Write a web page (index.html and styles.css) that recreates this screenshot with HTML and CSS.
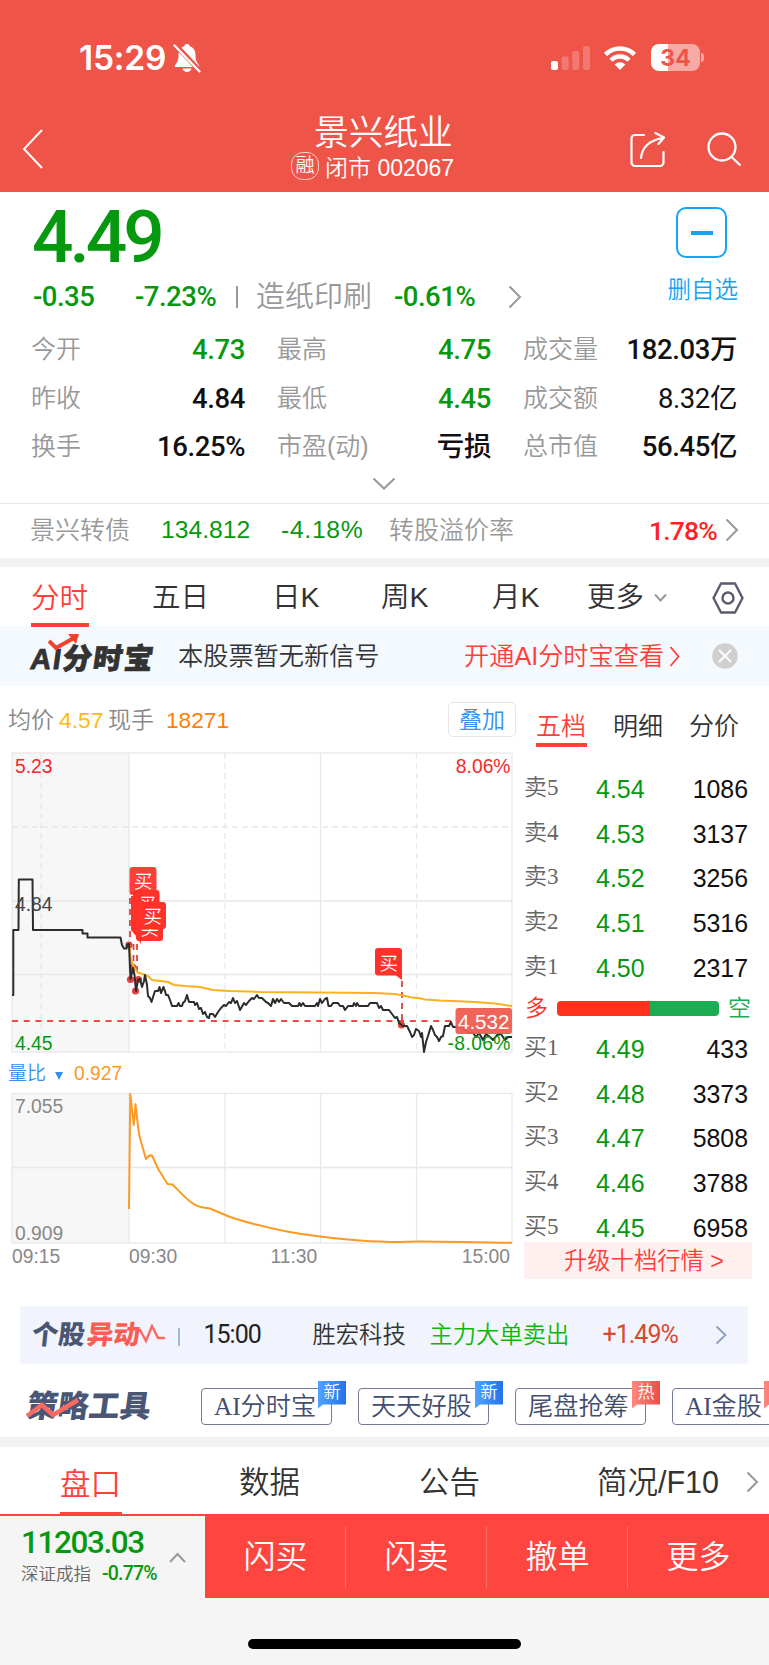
FILE: index.html
```html
<!DOCTYPE html>
<html lang="zh-CN">
<head>
    <meta charset="UTF-8">
    <title>景兴纸业 002067</title>
    <link rel="stylesheet" href="styles.css">
</head>
<body>
    <header class="header">
        <div class="status-bar">
            <span class="clock">15:29</span>
            <svg class="bell" width="28" height="30" viewBox="0 0 28 30">
                <path d="M14 1c-1.600 0-2.500.9-2.700 2.200C7.300 4.500 5.500 7.800 5.500 12c0 5-1 7.200-3.500 10.200-.8 1 0 1.800 1 1.800h22c1 0 1.800-.8 1-1.800C23.500 19.200 22.500 17 22.500 12c0-4.200-1.800-7.500-5.800-8.800C16.500 1.900 15.600 1 14 1zM9.500 25.500c.6 2.200 2.200 3.500 4.500 3.500s3.900-1.300 4.500-3.500z" fill="#fff"/>
                <path d="M3 2.500L27 28" stroke="#ef5449" stroke-width="5"/>
                <path d="M1.500 2.500L26.500 28.500" stroke="#fff" stroke-width="2.200" stroke-linecap="round"/>
            </svg>
            <svg class="signal" width="40" height="26" viewBox="0 0 40 26" fill="#fff">
                <rect x="0" y="16" width="7" height="9" rx="2"/>
                <rect x="10.700" y="11.500" width="7" height="13.500" rx="2" opacity=".22"/>
                <rect x="21.300" y="6" width="7" height="19" rx="2" opacity=".22"/>
                <rect x="32" y="1" width="7" height="24" rx="2" opacity=".22"/>
            </svg>
            <svg class="wifi" width="34" height="26" viewBox="0 0 34 26">
                <path d="M2.500 9.500a20.500 20.500 0 0 1 29 0" fill="none" stroke="#fff" stroke-width="4.600"/>
                <path d="M8 15.300a12.600 12.600 0 0 1 18 0" fill="none" stroke="#fff" stroke-width="4.400"/>
                <path d="M17 25l-5.300-5.600a7.600 7.600 0 0 1 10.600 0z" fill="#fff"/>
            </svg>
            <div class="battery"><span>34</span></div>
        </div>
        <div class="title-bar">
            <svg class="back" width="22" height="40" viewBox="0 0 22 40"><path d="M20 1L2 20l18 19" fill="none" stroke="#fff" stroke-width="2"/></svg>
            <div class="title">
                <h1>景兴纸业</h1>
                <p><i class="margin-mark">融</i>闭市 002067</p>
            </div>
            <svg class="share" width="36" height="37" viewBox="0 0 36 37" fill="none" stroke="#fff" stroke-width="2.200" stroke-linecap="round" stroke-linejoin="round">
                <path d="M14 3H5a3.500 3.500 0 0 0-3.500 3.500v24A3.500 3.500 0 0 0 5 34h25a3.500 3.500 0 0 0 3.500-3.500V20"/>
                <path d="M11 26C12 16 18 8.500 33 6M25.500 1L34 5.500 28.500 12"/>
            </svg>
            <svg class="search" width="35" height="35" viewBox="0 0 35 35" fill="none" stroke="#fff" stroke-width="2.300">
                <circle cx="15" cy="15" r="13.500"/><path d="M24 24.500l9.500 9"/>
            </svg>
        </div>
    </header>

    <section class="quote">
        <div class="quote-top">
            <div>
                <div class="price">4.49</div>
                <div class="change">
                    <span class="chg">-0.35</span>
                    <span class="pct">-7.23%</span>
                    <span class="bar"></span>
                    <span class="industry">造纸印刷</span>
                    <span class="ind-pct">-0.61%</span>
                    <svg width="14" height="24" viewBox="0 0 14 24"><path d="M1.500 1.500L12 12 1.500 22.500" class="chev"/></svg>
                </div>
            </div>
            <div class="unfollow">
                <div class="minus"></div>
                <span>删自选</span>
            </div>
        </div>
        <dl class="stats">
            <div><dt>今开</dt><dd class="green">4.73</dd></div>
            <div><dt>最高</dt><dd class="green">4.75</dd></div>
            <div><dt>成交量</dt><dd>182.03万</dd></div>
            <div><dt>昨收</dt><dd>4.84</dd></div>
            <div><dt>最低</dt><dd class="green">4.45</dd></div>
            <div><dt>成交额</dt><dd class="thin">8.32亿</dd></div>
            <div><dt>换手</dt><dd>16.25%</dd></div>
            <div><dt>市盈(动)</dt><dd>亏损</dd></div>
            <div><dt>总市值</dt><dd>56.45亿</dd></div>
        </dl>
        <svg class="expand" width="24" height="14" viewBox="0 0 24 14"><path d="M1.500 1.500L12 11.500l10.500-10" class="chev"/></svg>
    </section>

    <section class="bond">
        <span class="bond-name">景兴转债</span>
        <span class="bond-price">134.812</span>
        <span class="bond-pct">-4.18%</span>
        <span class="bond-label">转股溢价率</span>
        <span class="premium">1.78%</span>
        <svg width="14" height="24" viewBox="0 0 14 24"><path d="M1.500 1.500L12 12 1.500 22.500" class="chev"/></svg>
    </section>

    <nav class="period">
        <span class="active">分时</span>
        <span>五日</span>
        <span>日K</span>
        <span>周K</span>
        <span>月K</span>
        <span>更多</span>
        <svg class="more-arrow" width="13" height="10" viewBox="0 0 13 10"><path d="M1 1.500l5.500 6 5.500-6" class="chev"/></svg>
        <svg class="gear" width="32" height="32" viewBox="0 0 32 32" fill="none" stroke="#5b5b70" stroke-width="2.400" stroke-linejoin="round">
            <path d="M9 1.500h14L30.500 16 23 30.500H9L1.500 16z"/><circle cx="16" cy="16" r="5.500"/>
        </svg>
    </nav>

    <section class="ai-banner">
        <div class="ai-logo">
            <span>AI分时宝</span>
            <svg width="34" height="20" viewBox="0 0 34 20"><path d="M1 7l7 7L25 4.500" fill="none" stroke="#f5402f" stroke-width="4"/><path d="M20 0h11l-3 10z" fill="#f5402f"/></svg>
        </div>
        <span class="ai-text">本股票暂无新信号</span>
        <span class="ai-link">开通AI分时宝查看</span>
        <svg width="11" height="21" viewBox="0 0 11 21"><path d="M1.500 1l8 9.500-8 9.500" fill="none" stroke="#ff4039" stroke-width="1.800"/></svg>
        <svg class="close" width="26" height="26" viewBox="0 0 26 26"><circle cx="13" cy="13" r="12.800" fill="#cfcfcf"/><path d="M7 7l12 12M19 7L7 19" stroke="#fff" stroke-width="1.800"/></svg>
    </section>

    <main class="market">
        <div class="charts">
            <div class="chart-info">
                <span>均价</span><span class="avg">4.57</span><span>现手</span><span class="hand">18271</span>
                <button class="overlay">叠加</button>
            </div>
            <svg class="minute" width="520" height="308" viewBox="0 748 520 308">
                <rect x="12" y="753" width="117" height="299" fill="#f7f7f7"/>
                <g class="grid">
                    <rect x="12" y="753" width="500" height="299" fill="none"/>
                    <path d="M12 901H512M12 974.500H512M129 753V1052M320.500 753V1052"/>
                    <path class="dash" d="M12 827H512M41 753V1052M225 753V1052M416.500 753V1052"/>
                </g>
                <path class="now" d="M12 1021H456"/>
                <path class="flag-line" d="M130 898V944M137 944V980M133.500 944V970"/>
                <path class="flag-line" d="M402 981V1024"/>
                <g fill="#e0423d">
                    <circle cx="129" cy="945" r="3.600"/><circle cx="130.500" cy="979.500" r="3.600"/><circle cx="135.500" cy="991" r="3.600"/><circle cx="138.500" cy="979.500" r="3.600"/><circle cx="132.500" cy="967" r="3.600"/><circle cx="401.500" cy="1025" r="3.600"/>
                </g>
                <polyline class="avg-line" points="129,945 131,960 134,967 137,972 145,975 148,976 152,980 168,982 174,985 185,986 200,987 213,990 230,991 260,992 320,992.500 373,993 395,994 405,996 412,997.500 418,998 425,999.500 440,1000.500 475,1002 495,1003.500 512,1006"/>
                <polyline class="price-line" points="12,995 13.300,995 13.300,930 18.500,930 18.800,879.500 32.500,879.500 33,930 82.500,930 82.500,933.500 87.500,933.500 87.500,937.500 120.500,937.500 122,945 124,948.500 126.500,948.500 127,945 129,944 130.500,979 133,968 134.500,975 136,991 138,980 140,979 142,987 144,981 145,975 147,985 148,996 150,998 151.500,1002 154,994 155,991 158,991 159.500,987 161,993 163.500,987 165,991 166,995 168,995 170,1000 172,1006 177,1006 178.500,1003 180,1006 182,1006 183,1003 185,1001 187,995 189,1002 194,1002 195,1005 197,1003 199,1009 201,1008 203,1014 205,1012 207,1017 209,1018 210,1014 213,1014 215,1017 218,1012 221,1008 224,1005 226,1006 229,1002 231,1003 233,998 235,1003 237,1001 240,1010 244,1003 246,1005 249,1001 252,998 254,999 257,995 259,998 262,998 264,1000 266,1002 268,1003 271,1006 273,999 275,1003 277,999 279,1002 281,999 284,1003 289,1003 292,1006 298,1006 299.500,1003 301,1006 303,1003 305,1006 315,1006 317,1003 318,1006 320,999 322,1003 325,999 327,998 328.500,1006 331,1006 333,1003 338,1003 340,1006 343,1006 345,1010 348,1006 353,1006 354,1003 356,1006 357,1003 359,1006 368,1006 370,1003 377,1003 379,1008 381,1006 383,1010 389,1010 392,1014 395,1018 397,1017 399,1023 403,1026 407,1026 410,1032 412,1037 414,1035 416,1029 419,1031 421,1037 422,1033 424,1052 426,1042 428,1036 431,1026 433,1030 435,1035 437,1037 439,1041 441,1037 443,1036 445,1026 449,1026 451,1022 453,1027 456,1027 460,1026 468,1033 473,1033 476,1037 479,1033 483,1040 486,1034 490,1037 493,1040 497,1035 501,1034 505,1040 508,1037 512,1037"/>
                <g class="flag">
                    <rect x="129.500" y="867" width="27" height="28" rx="3" opacity=".93"/>
                    <text x="134" y="887.500">买</text>
                    <rect x="133" y="890" width="26.500" height="27" rx="3"/>
                    <text x="137.500" y="910.500">买</text>
                    <rect x="136" y="905" width="27" height="36" rx="3"/>
                    <text x="140.500" y="935">买</text>
                    <path d="M131 896h10v48l-5-8-5-6z"/>
                    <rect x="139.500" y="902" width="26.500" height="27" rx="3"/>
                    <text x="143.500" y="922.500">买</text>
                    <path d="M378 948h21a3 3 0 0 1 3 3v29l-6-4.500h-18a3 3 0 0 1-3-3v-21.500a3 3 0 0 1 3-3z"/>
                    <text x="379.500" y="969.500">买</text>
                </g>
                <rect x="455.500" y="1008" width="56.500" height="26" rx="3" fill="#ef5a50" opacity=".94"/>
                <text x="458" y="1029" class="now-text">4.532</text>
                <g class="label">
                    <text x="15" y="772.500" fill="#f5282b">5.23</text>
                    <text x="15" y="911" fill="#444">4.84</text>
                    <text x="15" y="1049.500" fill="#06980f">4.45</text>
                    <text x="510.500" y="772.500" fill="#f5282b" text-anchor="end">8.06%</text>
                    <text x="510.500" y="1050" fill="#06980f" text-anchor="end" textLength="63">-8.06%</text>
                </g>
            </svg>
            <div class="volume-info"><span>量比</span><i></i><b>0.927</b></div>
            <svg class="volume" width="520" height="183" viewBox="0 1087 520 183">
                <rect x="12" y="1093.500" width="117" height="149.500" fill="#f7f7f7"/>
                <g class="grid">
                    <rect x="12" y="1093.500" width="500" height="149.500" fill="none"/>
                    <path d="M12 1167.500H512M129 1093V1243M225 1093V1243M320.500 1093V1243M416.500 1093V1243"/>
                </g>
                <path class="ratio-line" d="M129 1209L130.300 1094 133.800 1125 135.500 1104C138 1125 138 1132 140.500 1140L146 1159C148 1156 150 1155 152 1155.500L158.500 1169.500 167.500 1184 172.500 1184.500C184 1196 192 1206 203 1207.500L210 1208.500 230 1217C270 1230 305 1236 360 1240.500 382 1242 395 1242.600 416 1241.600 440 1241.200 470 1242.500 512 1242.800"/>
                <g class="label" fill="#888">
                    <text x="15" y="1112.500">7.055</text>
                    <text x="15" y="1239.500">0.909</text>
                    <text x="12" y="1262.500">09:15</text>
                    <text x="129" y="1262.500">09:30</text>
                    <text x="270.500" y="1262.500">11:30</text>
                    <text x="510" y="1262.500" text-anchor="end">15:00</text>
                </g>
            </svg>
        </div>

        <div class="depth">
            <div class="depth-tabs"><span class="active">五档</span><span>明细</span><span>分价</span></div>
            <ul>
                <li><span>卖5</span><b>4.54</b><em>1086</em></li>
                <li><span>卖4</span><b>4.53</b><em>3137</em></li>
                <li><span>卖3</span><b>4.52</b><em>3256</em></li>
                <li><span>卖2</span><b>4.51</b><em>5316</em></li>
                <li><span>卖1</span><b>4.50</b><em>2317</em></li>
            </ul>
            <div class="ratio"><span class="bull">多</span><div class="ratio-bar"></div><span class="bear">空</span></div>
            <ul>
                <li><span>买1</span><b>4.49</b><em>433</em></li>
                <li><span>买2</span><b>4.48</b><em>3373</em></li>
                <li><span>买3</span><b>4.47</b><em>5808</em></li>
                <li><span>买4</span><b>4.46</b><em>3788</em></li>
                <li><span>买5</span><b>4.45</b><em>6958</em></li>
            </ul>
            <div class="upgrade">升级十档行情 &gt;</div>
        </div>
    </main>

    <section class="alert">
        <div class="alert-logo"><span>个股</span><span class="hot">异动</span></div>
        <svg width="28" height="22" viewBox="0 0 28 22"><path d="M0 6l3 0 6 11L15 2l6 12h7" fill="none" stroke="#fb6a61" stroke-width="2.400"/></svg>
        <span class="alert-bar"></span>
        <span class="alert-time">15:00</span>
        <span class="alert-name">胜宏科技</span>
        <span class="alert-type">主力大单卖出</span>
        <span class="alert-pct">+1.49%</span>
        <svg width="12" height="20" viewBox="0 0 12 20"><path d="M1.500 1.500L10.500 10l-9 8.500" fill="none" stroke="#8d9cc4" stroke-width="1.800"/></svg>
    </section>

    <section class="tools">
        <div class="tools-logo">
            <span>策略工具</span>
            <svg width="54" height="22" viewBox="0 0 54 22"><path d="M1 19L16 8l11 10L52 3" fill="none" stroke="#fb6a61" stroke-width="4.500"/></svg>
        </div>
        <div class="tool">AI分时宝<i class="badge">新</i></div>
        <div class="tool">天天好股<i class="badge">新</i></div>
        <div class="tool">尾盘抢筹<i class="badge hot">热</i></div>
        <div class="tool short">AI金股<i class="badge hot">热</i></div>
    </section>

    <nav class="info-tabs">
        <span class="active">盘口</span>
        <span>数据</span>
        <span>公告</span>
        <span class="f10">简况/F10</span>
        <svg width="13" height="22" viewBox="0 0 13 22"><path d="M1.500 1.500L11 11l-9.500 9.500" class="chev"/></svg>
    </nav>

    <footer class="trade">
        <div class="index">
            <div>
                <strong>11203.03</strong>
                <p>深证成指<b>-0.77%</b></p>
            </div>
            <svg width="17" height="11" viewBox="0 0 17 11"><path d="M1 10l7.500-8L16 10" class="chev"/></svg>
        </div>
        <button>闪买</button>
        <button>闪卖</button>
        <button>撤单</button>
        <button>更多</button>
    </footer>
    <div class="home"></div>
</body>
</html>
```

FILE: styles.css
```css
* {
    box-sizing: border-box;
}

body {
    margin: 0;
    width: 769px;
    height: 1665px;
    overflow: hidden;
    background: #fff;
    color: #333;
    font-family: "Liberation Sans", "Noto Sans CJK SC", sans-serif;
    font-weight: 350;
}

h1, p, ul, dl, dd {
    margin: 0;
    padding: 0;
    font-weight: inherit;
}

svg {
    display: block;
    flex: none;
}

span {
    white-space: nowrap;
}

i, em {
    font-style: normal;
}

button {
    padding: 0;
    font: inherit;
}

.chev {
    fill: none;
    stroke: #999;
    stroke-width: 2;
}

.green {
    color: #06980f;
}

/* header */
.header {
    height: 191.500px;
    background: #ef5449;
    color: #fff;
}

.status-bar {
    display: flex;
    align-items: center;
    height: 115px;
    padding-left: 79px;
}

.clock {
    width: 94px;
    font: 600 33.500px "Inter", sans-serif;
    letter-spacing: -0.200px;
}

.signal {
    margin-left: 350px;
}

.wifi {
    margin-left: 12px;
}

.battery {
    position: relative;
    width: 49px;
    height: 27px;
    margin-left: 14px;
    border-radius: 8px;
    background: linear-gradient(90deg, #fff 17px, #f7a9a3 17px);
    color: #ef5449;
    font: 700 23px/28px "Inter", sans-serif;
    text-align: center;
}

.battery::after {
    content: "";
    position: absolute;
    right: -4px;
    top: 9px;
    width: 3px;
    height: 9px;
    border-radius: 0 3px 3px 0;
    background: #f7a9a3;
}

.title-bar {
    display: flex;
    height: 76px;
    padding-left: 22px;
}

.back {
    margin-top: 14px;
}

.title {
    width: 182px;
    margin-left: 247px;
}

.title h1 {
    padding-left: 23px;
    font-size: 34.700px;
    line-height: 36px;
}

.title p {
    display: flex;
    align-items: center;
    height: 30px;
    font-size: 23px;
}

.margin-mark {
    width: 28px;
    height: 28px;
    margin-right: 6px;
    border: 1.500px solid #fbd0cc;
    border-radius: 12px;
    font-size: 19px;
    line-height: 26px;
    text-align: center;
}

.share {
    margin: 17px 0 0 157px;
}

.search {
    margin: 17px 0 0 41px;
}

/* quote */
.quote {
    height: 311.500px;
}

.quote-top {
    display: flex;
    justify-content: space-between;
    height: 133.500px;
    padding: 0 31px 0 32px;
}

.price {
    height: 88px;
    color: #06980f;
    font: 500 73px/90px Roboto, sans-serif;
    letter-spacing: -4px;
}

.change {
    display: flex;
    align-items: center;
    height: 34px;
    color: #06980f;
    font: 500 27.500px Roboto, "Noto Sans CJK SC", sans-serif;
    letter-spacing: -0.500px;
}

.chg, .pct {
    width: 102px;
    padding-left: 1px;
}

.bar {
    width: 2px;
    height: 22px;
    background: #999;
}

.industry {
    margin-left: 18px;
    width: 138px;
    color: #999;
    font: 350 29px/34px "Liberation Sans", "Noto Sans CJK SC", sans-serif;
    letter-spacing: 0;
}

.ind-pct {
    width: 114px;
}

.unfollow {
    display: flex;
    flex-direction: column;
    align-items: center;
    padding-top: 15.500px;
    color: #12a5f5;
    font-size: 23.500px;
}

.minus {
    display: flex;
    align-items: center;
    justify-content: center;
    width: 51px;
    height: 51px;
    margin-bottom: 13px;
    margin-right: 2px;
    border: 2px solid #12a5f5;
    border-radius: 10px;
}

.minus::before {
    content: "";
    width: 22px;
    height: 4px;
    background: #12a5f5;
}

.stats {
    display: grid;
    grid-template-columns: repeat(3, 214px);
    column-gap: 32px;
    padding: 0 31px;
    grid-auto-rows: 48.500px;
}

.stats div {
    display: flex;
    justify-content: space-between;
    align-items: center;
}

.stats dt {
    color: #999;
    font-size: 25px;
    line-height: 34px;
}

.stats dd {
    font: 500 27.500px Roboto, "Noto Sans CJK SC", sans-serif;
    line-height: 34px;
    padding-top: 2px;
    letter-spacing: -0.400px;
}

.stats dd:not(.green) {
    color: #111;
}

.stats .thin {
    font-weight: 400;
}

.expand {
    margin: 6px auto 0 372px;
}

.bond {
    display: flex;
    align-items: center;
    height: 64px;
    padding: 0 0 2px 30px;
    border-top: 1px solid #e8e8e8;
    border-bottom: 9px solid #f2f2f2;
    color: #999;
    font-size: 25px;
    line-height: 34px;
}

.bond-name {
    width: 131px;
}

.bond-price, .bond-pct {
    color: #06980f;
    width: 120px;
    font-size: 24.700px;
}

.bond-pct {
    width: 108px;
    letter-spacing: 0.700px;
}

.premium {
    width: 76px;
    margin-left: auto;
    color: #ff2222;
    font: 500 26.500px Roboto, sans-serif;
    letter-spacing: -0.800px;
}

.bond svg {
    margin-right: 30px;
}

/* chart period tabs */
.period {
    display: grid;
    grid-template-columns: 120px 120px 109px 111px 95px 67px 58px 1fr;
    align-items: center;
    height: 59px;
    padding-left: 32px;
    font-size: 28.500px;
    line-height: 61px;
}

.active {
    color: #ff4039;
}

.period .active {
    width: 58px;
    height: 59px;
    margin-left: -1px;
    border-bottom: 4px solid #ff4039;
}

.ai-banner {
    display: flex;
    align-items: center;
    height: 60px;
    padding-left: 31px;
    background: #f4f9fe;
    font-size: 25.200px;
    line-height: 58px;
}

.ai-logo {
    position: relative;
    width: 147px;
    font: 900 29px/36px "Liberation Sans", "Noto Sans CJK SC", sans-serif;
}

.ai-logo span {
    display: block;
    transform: skewX(-8deg);
    letter-spacing: 1.600px;
    padding-top: 5px;
    -webkit-text-stroke: 0.800px #333;
}

.ai-logo svg {
    position: absolute;
    left: 17px;
    top: -2px;
}

.ai-text {
    width: 286px;
}

.ai-link {
    width: 205px;
    color: #ff4039;
}

.close {
    margin-left: 32px;
}

/* charts */
.market {
    display: flex;
    height: 620px;
}

.charts {
    width: 524px;
}

.chart-info {
    display: flex;
    align-items: center;
    height: 62px;
    padding: 5px 8px 0;
    color: #888;
    font-size: 23px;
    line-height: 34px;
}

.avg {
    width: 54px;
    padding-left: 5px;
    color: #fdbb11;
    font-size: 22.900px;
}

.hand {
    padding-left: 12px;
    color: #fd7f05;
    font-size: 22.700px;
}

.overlay {
    width: 68px;
    height: 35px;
    margin-left: auto;
    border: 1.500px solid #e6e6e6;
    border-radius: 5px;
    background: #fff;
    color: #3590f2;
    line-height: 32px;
}

.grid {
    stroke: #e8e8e8;
    stroke-width: 1.300;
    fill: none;
}

.grid .dash {
    stroke-dasharray: 6 4;
}

.now {
    stroke: #ef4b46;
    stroke-width: 2;
    stroke-dasharray: 6 5.700;
}

.flag-line {
    stroke: #e0423d;
    stroke-width: 1.800;
    stroke-dasharray: 6 5;
    fill: none;
}

.avg-line, .price-line, .ratio-line {
    fill: none;
    stroke: #fdb11d;
    stroke-width: 2;
    stroke-linejoin: round;
}

.price-line {
    stroke: #2c2c2c;
}

.ratio-line {
    stroke: #fd9a24;
}

.flag {
    fill: #ff3229;
}

.flag text {
    fill: #fff;
    font-size: 18.500px;
}

.now-text {
    fill: #fff;
    font-size: 20.500px;
}

.label {
    font-size: 19.300px;
}

.volume-info {
    display: flex;
    align-items: center;
    height: 31px;
    padding: 4px 0 0 8px;
    color: #3590f2;
    font-size: 19px;
    line-height: 26px;
}

.volume-info i {
    margin: 4px 11px 0 9px;
    border: 4px solid transparent;
    border-top: 8px solid #3590f2;
    border-bottom: 0;
}

.volume-info b {
    color: #fd9a24;
    font-weight: 350;
    font-size: 19.300px;
}

/* order depth */
.depth {
    width: 228px;
}

.depth-tabs {
    display: flex;
    gap: 26px;
    height: 61px;
    margin-bottom: 20px;
    padding-left: 12px;
    font-size: 25px;
    line-height: 80px;
}

.depth-tabs .active {
    width: 51px;
    border-bottom: 4px solid #ff4039;
}

.depth ul {
    list-style: none;
}

.depth li {
    display: flex;
    align-items: center;
    height: 44.600px;
    padding: 0 4px 0 0;
    color: #666;
    font-size: 25px;
    line-height: 34px;
}

.depth li span {
    width: 72px;
    font: 350 23px/32px "Liberation Serif", "Noto Sans CJK SC", serif;
    padding-bottom: 2px;
}

.depth b {
    color: #06980f;
    font-weight: 350;
}

.depth em {
    margin-left: auto;
    color: #111;
    font-size: 24.900px;
}

.ratio {
    display: flex;
    align-items: center;
    height: 37px;
    margin: 0;
    padding-left: 1px;
    font-size: 23px;
    line-height: 34px;
}

.bull {
    width: 32px;
    color: #ff301c;
}

.ratio-bar {
    width: 162px;
    height: 15px;
    margin-right: 9px;
    border-radius: 4px;
    background: linear-gradient(90deg, #ff301c 93px, #1dac52 93px);
}

.bear {
    color: #1dac52;
}

.upgrade {
    position: relative;
    height: 37px;
    margin-top: -8px;
    padding-left: 40px;
    background: #fff0f0;
    color: #ff4039;
    font-size: 23.300px;
    line-height: 39px;
}

/* alerts */
.alert {
    display: flex;
    align-items: center;
    width: 728px;
    height: 58px;
    margin: 0 0 0 20px;
    padding-left: 12px;
    border-radius: 4px;
    background: #f1f4fc;
    font-size: 23.300px;
    line-height: 34px;
}

.alert-logo {
    display: flex;
    gap: 2px;
    width: 105px;
    transform: skewX(-6deg);
    color: #4b5675;
    font-weight: 900;
    font-size: 26.500px;
}

.alert-logo .hot {
    color: #fb5c53;
}

.alert-bar {
    width: 1.500px;
    height: 18px;
    margin: 4px 24px 0 13px;
    background: #a9b6dc;
}

.alert-time {
    width: 109px;
    font: 400 25px/34px Roboto, sans-serif;
    letter-spacing: -1px;
    color: #222;
}

.alert-name {
    width: 117px;
}

.alert-type {
    width: 173px;
    color: #0db80d;
}

.alert-pct {
    width: 112px;
    color: #d9482f;
    font: 400 25px/34px Roboto, sans-serif;
    letter-spacing: -1px;
}

.tools {
    display: flex;
    height: 83px;
    padding: 23.500px 0 0 27px;
    border-bottom: 10px solid #f2f2f2;
    overflow: hidden;
}

.tools-logo {
    position: relative;
    flex: none;
    width: 174px;
    color: #4b5675;
    font-size: 31px;
    font-weight: 900;
    line-height: 37px;
}

.tools-logo span {
    display: inline-block;
    transform: skewX(-8deg);
}

.tools-logo svg {
    position: absolute;
    left: -1px;
    top: 9px;
}

.tool {
    position: relative;
    flex: none;
    width: 131px;
    height: 37px;
    margin-right: 26px;
    padding-left: 12px;
    border: 1.500px solid #737b97;
    border-radius: 4px;
    color: #434d6f;
    font: 350 25.200px/36px "Liberation Serif", "Noto Sans CJK SC", serif;
}

.tool.short {
    width: 106px;
}

.badge {
    position: absolute;
    right: -15px;
    top: -8px;
    width: 28px;
    height: 28px;
    background: linear-gradient(90deg, #52a3ff, #2173ea);
    clip-path: polygon(0 0, 100% 0, 100% 24px, 5px 24px, 0 28px);
    color: #fff;
    font: 350 17px/24px "Liberation Sans", "Noto Sans CJK SC", sans-serif;
    text-align: center;
}

.badge.hot {
    background: linear-gradient(90deg, #ff887e, #ec4f48);
}

.info-tabs {
    display: grid;
    grid-template-columns: 179px 180px 180px 147px 1fr;
    align-items: center;
    height: 69px;
    padding-left: 60px;
    border-bottom: 2px solid #ff4540;
    font-size: 30.500px;
    line-height: 70px;
}

.info-tabs .active {
    width: 62px;
    height: 67px;
    border-bottom: 4px solid #ff4540;
}

.info-tabs .f10 {
    margin-left: -2px;
}

.trade {
    display: flex;
    height: 82px;
    background: #f5f5f5;
}

.index {
    display: flex;
    align-items: center;
    justify-content: space-between;
    width: 205px;
    padding: 0 19px 0 21px;
}

.index strong {
    display: block;
    color: #06980f;
    font: 500 31.500px/34px Roboto, sans-serif;
    letter-spacing: -1.400px;
}

.index p {
    color: #666;
    font-size: 17.500px;
    line-height: 28px;
    white-space: nowrap;
}

.index b {
    padding-left: 11px;
    color: #06980f;
    font: 500 19.500px Roboto, sans-serif;
    letter-spacing: -0.800px;
}

.trade button {
    flex: 1;
    border: 0;
    background: linear-gradient(#ff706b, #ff706b) right center / 1px 62px no-repeat #ff4540;
    color: #fff;
    font-size: 32px;
    line-height: 40px;
}

.trade button:last-child {
    background: #ff4540;
}

.home {
    display: flex;
    justify-content: center;
    height: 67px;
    padding-top: 41px;
    background: #f5f5f5;
}

.home::before {
    content: "";
    width: 273px;
    height: 10px;
    border-radius: 5px;
    background: #000;
}
```
